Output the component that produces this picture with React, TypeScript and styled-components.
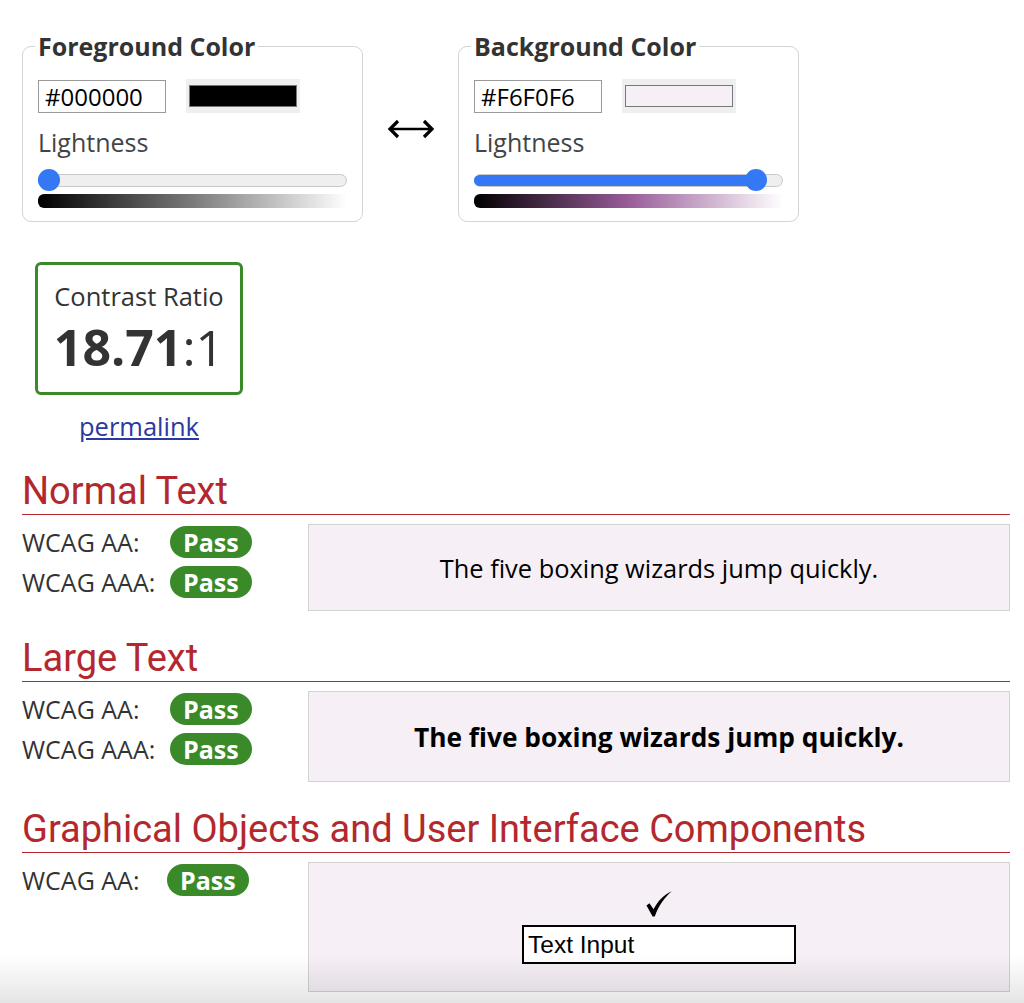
import React from 'react';
import styled, { createGlobalStyle } from 'styled-components';

const GlobalStyle = createGlobalStyle`
  html, body {
    margin: 0;
    padding: 0;
    background: #ffffff;
  }
  body {
    font-family: 'Open Sans', 'Noto Sans', sans-serif;
    color: #333333;
  }
`;

const GREEN = '#3a8a2a';
const RED = '#b3282d';

interface ColorPanel {
  title: string;
  hex: string;
  lightness: number;
  hue: number;
  sat: number;
}

const panels: ColorPanel[] = [
  { title: 'Foreground Color', hex: '#000000', lightness: 0, hue: 0, sat: 0 },
  { title: 'Background Color', hex: '#F6F0F6', lightness: 0.95, hue: 300, sat: 25 }
];

const sections = [
  {
    title: 'Normal Text',
    results: ['WCAG AA:', 'WCAG AAA:'],
    kind: 'normal' as const,
    labelWidth: 148,
    boxHeight: 87
  },
  {
    title: 'Large Text',
    results: ['WCAG AA:', 'WCAG AAA:'],
    kind: 'large' as const,
    labelWidth: 148,
    boxHeight: 91
  },
  {
    title: 'Graphical Objects and User Interface Components',
    results: ['WCAG AA:'],
    kind: 'ui' as const,
    labelWidth: 145,
    boxHeight: 130
  }
];

const SwapArrow = () => (
  <svg width="48" height="22" viewBox="0 0 48 22" aria-hidden="true">
    <line x1="3" y1="11" x2="45" y2="11" stroke="#000" strokeWidth="2.4" />
    <polyline points="11,3 3,11 11,19" fill="none" stroke="#000" strokeWidth="3.2" strokeLinejoin="miter" />
    <polyline points="37,3 45,11 37,19" fill="none" stroke="#000" strokeWidth="3.2" strokeLinejoin="miter" />
  </svg>
);

const CheckMark = () => (
  <svg width="26" height="26" viewBox="0 0 26 26" aria-hidden="true">
    <path
      d="M0.5 14.5 L3.4 12.3 L7.6 18.2 C11.5 10.5 17.5 3.8 25.8 0.2 C18.8 6.2 12.6 14.5 8.8 25.6 L6.6 25.6 Z"
      fill="#000"
    />
  </svg>
);

export default function App() {
  return (
    <>
      <GlobalStyle />
      <Page>
        <PickerRow>
          <ColorField>
            <Legend>{panels[0].title}</Legend>
            <PickerBody panel={panels[0]} />
          </ColorField>
          <ArrowCell>
            <SwapArrow />
          </ArrowCell>
          <ColorField>
            <Legend>{panels[1].title}</Legend>
            <PickerBody panel={panels[1]} />
          </ColorField>
        </PickerRow>

        <RatioBlock>
          <RatioBox>
            <RatioLabel>Contrast Ratio</RatioLabel>
            <RatioValue>
              <strong>18.71</strong>:1
            </RatioValue>
          </RatioBox>
          <Permalink href="#">permalink</Permalink>
        </RatioBlock>

        {sections.map((s) => (
          <Section key={s.title}>
            <Heading>{s.title}</Heading>
            <SectionBody>
              <Results>
                {s.results.map((r) => (
                  <ResultRow key={r}>
                    <ResultLabel $width={s.labelWidth}>{r}</ResultLabel>
                    <Badge>Pass</Badge>
                  </ResultRow>
                ))}
              </Results>
              {s.kind === 'ui' ? (
                <SampleBox $height={s.boxHeight}>
                  <CheckMark />
                  <FakeInput>Text Input</FakeInput>
                </SampleBox>
              ) : (
                <SampleBox $height={s.boxHeight}>
                  <SampleText $bold={s.kind === 'large'}>
                    The five boxing wizards jump quickly.
                  </SampleText>
                </SampleBox>
              )}
            </SectionBody>
          </Section>
        ))}
      </Page>
      <BottomShade />
    </>
  );
}

const PickerBody = ({ panel }: { panel: ColorPanel }) => {
  const pct = panel.lightness * 100;
  const mid = `hsl(${panel.hue}, ${panel.sat}%, 48%)`;
  return (
    <>
      <HexRow>
        <HexInput>{panel.hex}</HexInput>
        <Swatch>
          <SwatchFill style={{ background: panel.hex }} />
        </Swatch>
      </HexRow>
      <FieldLabel>Lightness</FieldLabel>
      <Track>
        <TrackFill style={{ width: `calc(${pct}% - ${pct * 0.22}px + 11px)` }} />
        <Thumb style={{ left: `calc(${pct}% - ${pct * 0.22}px)` }} />
      </Track>
      <LightnessBar
        style={{
          background: `linear-gradient(to right, #000 0%, ${mid} 50%, rgba(255,255,255,0.6) 100%)`
        }}
      />
    </>
  );
};

const Page = styled.div`
  padding: 33px 14px 40px 22px;
`;

const PickerRow = styled.div`
  display: flex;
  align-items: center;
`;

const ColorField = styled.fieldset`
  box-sizing: border-box;
  width: 341px;
  margin: 0;
  padding: 0 15px 13px 15px;
  border: 1.5px solid #d4d4d4;
  border-radius: 9px;
  display: flex;
  flex-direction: column;
`;

const Legend = styled.legend`
  margin-left: -3px;
  padding: 0 3px;
  font-size: 25px;
  line-height: 26px;
  font-weight: 700;
  color: #333;
`;

const ArrowCell = styled.div`
  width: 95px;
  display: flex;
  justify-content: center;
  padding-top: 2px;
`;

const HexRow = styled.div`
  display: flex;
  align-items: center;
  gap: 20px;
  margin-top: 20px;
`;

const HexInput = styled.div`
  box-sizing: border-box;
  width: 128px;
  height: 33px;
  border: 1px solid #9a9a9a;
  padding: 0 6px;
  font-size: 24px;
  line-height: 31px;
  color: #000;
`;

const Swatch = styled.div`
  box-sizing: border-box;
  width: 114px;
  height: 34px;
  background: #efefef;
  padding: 6px 3px;
`;

const SwatchFill = styled.div`
  box-sizing: border-box;
  width: 100%;
  height: 100%;
  border: 1px solid #777;
`;

const FieldLabel = styled.div`
  margin-top: 14px;
  font-size: 25px;
  line-height: 30px;
  color: #444;
`;

const Track = styled.div`
  position: relative;
  box-sizing: border-box;
  margin-top: 17px;
  height: 13px;
  border: 1px solid #c8c8c8;
  border-radius: 7px;
  background: #efefef;
`;

const TrackFill = styled.div`
  height: 11px;
  margin: 0 0 0 -1px;
  border-radius: 6px;
  background: #3478f6;
`;

const Thumb = styled.div`
  position: absolute;
  top: -6px;
  margin-left: -1px;
  width: 22px;
  height: 22px;
  border-radius: 50%;
  background: #3478f6;
`;

const LightnessBar = styled.div`
  margin-top: 7px;
  height: 14px;
  border-radius: 6px 0 0 6px;
`;

const RatioBlock = styled.div`
  display: flex;
  flex-direction: column;
  align-items: center;
  width: 208px;
  margin: 40px 0 0 13px;
  padding-bottom: 3px;
`;

const RatioBox = styled.div`
  box-sizing: border-box;
  width: 208px;
  height: 133px;
  border: 3px solid ${GREEN};
  border-radius: 6px;
  display: flex;
  flex-direction: column;
  align-items: center;
  padding-top: 16px;
`;

const RatioLabel = styled.div`
  font-size: 25.5px;
  line-height: 30px;
  color: #333;
`;

const RatioValue = styled.div`
  font-size: 50px;
  line-height: 60px;
  color: #333;
  margin-top: 6px;
  strong {
    font-weight: 700;
  }
`;

const Permalink = styled.a`
  margin-top: 16px;
  font-size: 25.5px;
  line-height: 30px;
  color: #2b3a9e;
  text-decoration: underline;
`;

const Section = styled.section`
  margin-top: 24px;
`;

const Heading = styled.h2`
  margin: 0;
  font-family: Roboto, 'Liberation Sans', sans-serif;
  font-weight: 400;
  font-size: 38px;
  line-height: 46px;
  color: ${RED};
  border-bottom: 1px solid ${RED};
`;

const SectionBody = styled.div`
  display: grid;
  grid-template-columns: 286px 1fr;
  margin-top: 9px;
`;

const Results = styled.div`
  display: flex;
  flex-direction: column;
  gap: 8px;
  padding-top: 2px;
`;

const ResultRow = styled.div`
  display: flex;
  align-items: center;
`;

interface ResultLabelProps {
  $width: number;
}
const ResultLabel = styled.span<ResultLabelProps>`
  width: ${(p) => p.$width}px;
  font-size: 25px;
  line-height: 30px;
  color: #333;
`;

const Badge = styled.span`
  box-sizing: border-box;
  height: 32px;
  padding: 0 13px;
  border-radius: 16px;
  background: ${GREEN};
  color: #fff;
  font-weight: 700;
  font-size: 25px;
  line-height: 32px;
`;

interface SampleBoxProps {
  $height: number;
}
const SampleBox = styled.div<SampleBoxProps>`
  box-sizing: border-box;
  height: ${(p) => p.$height}px;
  background: #f6f0f6;
  border: 1.5px solid #d2d2d2;
  display: flex;
  flex-direction: column;
  align-items: center;
  justify-content: center;
  gap: 8px;
`;

interface SampleTextProps {
  $bold?: boolean;
}
const SampleText = styled.div<SampleTextProps>`
  font-size: ${(p) => (p.$bold ? '26.3px' : '25.4px')};
  font-weight: ${(p) => (p.$bold ? 700 : 400)};
  color: #000;
`;

const FakeInput = styled.div`
  box-sizing: border-box;
  width: 274px;
  height: 39px;
  border: 2px solid #000;
  background: #fff;
  padding: 0 4px;
  font-family: 'Liberation Sans', Arial, sans-serif;
  font-size: 24.5px;
  line-height: 35px;
  color: #000;
`;

const BottomShade = styled.div`
  position: fixed;
  left: 0;
  right: 0;
  bottom: 0;
  height: 48px;
  pointer-events: none;
  background: linear-gradient(to bottom, rgba(0, 0, 0, 0), rgba(0, 0, 0, 0.1));
`;
